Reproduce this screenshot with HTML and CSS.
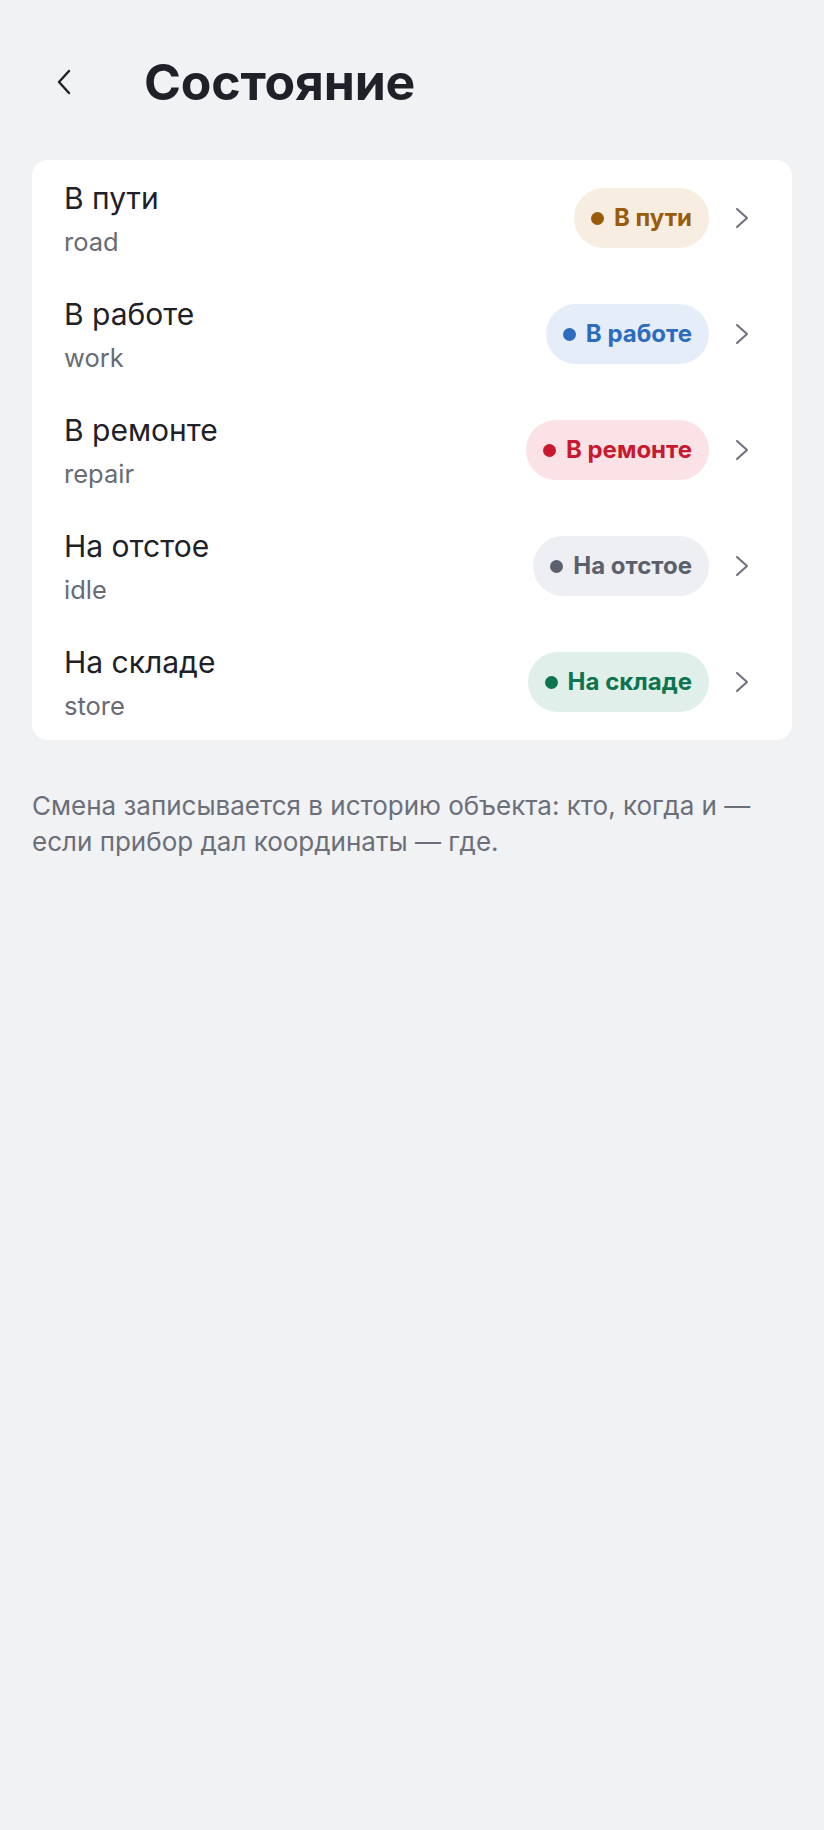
FILE: index.html
```html
<!DOCTYPE html>
<html lang="ru">
<head>
    <meta charset="utf-8">
    <title>Состояние</title>
    <link rel="stylesheet" href="styles.css">
</head>
<body>
    <div class="header">
        <button class="back" aria-label="Назад">
            <svg width="16" height="26" viewBox="0 0 16 26"><path d="M13 2 L3 13 L13 24" fill="none" stroke="#1f2128" stroke-width="2.4" stroke-linecap="round" stroke-linejoin="round"/></svg>
        </button>
        <h1>Состояние</h1>
    </div>

    <div class="card">
        <div class="row">
            <div class="labels">
                <div class="name">В пути</div>
                <div class="code">road</div>
            </div>
            <span class="badge road"><span class="dot"></span>В пути</span>
            <svg class="chev" width="14" height="22" viewBox="0 0 14 22"><path d="M2 2 L12 11 L2 20" fill="none" stroke="#6b6f7a" stroke-width="2" stroke-linecap="round" stroke-linejoin="round"/></svg>
        </div>
        <div class="row">
            <div class="labels">
                <div class="name">В работе</div>
                <div class="code">work</div>
            </div>
            <span class="badge work"><span class="dot"></span>В работе</span>
            <svg class="chev" width="14" height="22" viewBox="0 0 14 22"><path d="M2 2 L12 11 L2 20" fill="none" stroke="#6b6f7a" stroke-width="2" stroke-linecap="round" stroke-linejoin="round"/></svg>
        </div>
        <div class="row">
            <div class="labels">
                <div class="name">В ремонте</div>
                <div class="code">repair</div>
            </div>
            <span class="badge repair"><span class="dot"></span>В ремонте</span>
            <svg class="chev" width="14" height="22" viewBox="0 0 14 22"><path d="M2 2 L12 11 L2 20" fill="none" stroke="#6b6f7a" stroke-width="2" stroke-linecap="round" stroke-linejoin="round"/></svg>
        </div>
        <div class="row">
            <div class="labels">
                <div class="name">На отстое</div>
                <div class="code">idle</div>
            </div>
            <span class="badge idle"><span class="dot"></span>На отстое</span>
            <svg class="chev" width="14" height="22" viewBox="0 0 14 22"><path d="M2 2 L12 11 L2 20" fill="none" stroke="#6b6f7a" stroke-width="2" stroke-linecap="round" stroke-linejoin="round"/></svg>
        </div>
        <div class="row">
            <div class="labels">
                <div class="name">На складе</div>
                <div class="code">store</div>
            </div>
            <span class="badge store"><span class="dot"></span>На складе</span>
            <svg class="chev" width="14" height="22" viewBox="0 0 14 22"><path d="M2 2 L12 11 L2 20" fill="none" stroke="#6b6f7a" stroke-width="2" stroke-linecap="round" stroke-linejoin="round"/></svg>
        </div>
    </div>

    <p class="note">Смена записывается в историю объекта: кто, когда и — если прибор дал координаты — где.</p>
</body>
</html>
```

FILE: styles.css
```css
body {
    margin: 0;
    background: #f1f2f4;
    font-family: Inter, "Noto Sans", sans-serif;
    color: #1f2128;
}

.header {
    display: flex;
    align-items: center;
    height: 84px;
    padding: 40px 32px 0;
    gap: 48px;
}
.back {
    width: 64px;
    height: 64px;
    border: none;
    background: none;
    padding: 0;
    display: flex;
    align-items: center;
    justify-content: center;
}
.header h1 {
    margin: 0;
    font-size: 50px;
    font-weight: 700;
    letter-spacing: -0.2px;
}

.card {
    margin: 36px 32px 0;
    background: #fff;
    border-radius: 16px;
}
.row {
    display: flex;
    align-items: center;
    padding: 18px 43px 18px 32px;
}
.labels {
    flex: 1;
    padding-top: 2px;
}
.name {
    font-size: 30px;
    line-height: 36px;
}
.code {
    margin-top: 10px;
    font-size: 25.5px;
    line-height: 32px;
    color: #676b76;
}

.badge {
    display: inline-flex;
    align-items: center;
    gap: 10px;
    padding: 16px 17px;
    border-radius: 30px;
    font-size: 24px;
    line-height: 28px;
    font-weight: 700;
}
.dot {
    width: 13px;
    height: 13px;
    border-radius: 50%;
    background: currentColor;
}
.road { background: #f7ede0; color: #985c0b; }
.work { background: #e4edf8; color: #2d6bbf; }
.repair { background: #fbe2e6; color: #c8192e; }
.idle { background: #eeeff2; color: #5b606c; }
.store { background: #e1efea; color: #0d7450; }

.chev {
    margin-left: 26px;
}

.note {
    margin: 48px 32px 0;
    font-size: 26px;
    line-height: 36px;
    color: #6b6f7a;
}
```
